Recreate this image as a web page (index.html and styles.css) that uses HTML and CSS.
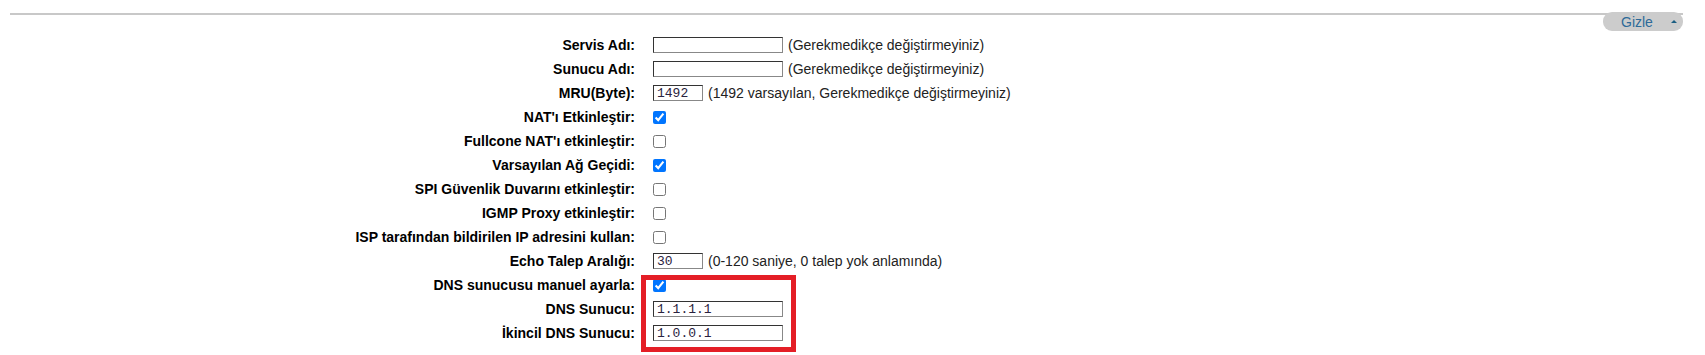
FILE: index.html
```html
<!DOCTYPE html>
<html lang="tr">
  <head>
    <meta charset="UTF-8" />
    <title>WAN Ayarları</title>
    <link rel="stylesheet" href="styles.css">
  </head>
  <body>
    <div class="bar">
      <button class="toggle" type="button">Gizle <span class="arrow"></span></button>
    </div>

    <div class="form">
      <label>Servis Adı:</label>
      <div class="field"><input type="text" class="text"> <span>(Gerekmedikçe değiştirmeyiniz)</span></div>

      <label>Sunucu Adı:</label>
      <div class="field"><input type="text" class="text"> <span>(Gerekmedikçe değiştirmeyiniz)</span></div>

      <label>MRU(Byte):</label>
      <div class="field"><input type="text" class="text short" value="1492"> <span>(1492 varsayılan, Gerekmedikçe değiştirmeyiniz)</span></div>

      <label>NAT'ı Etkinleştir:</label>
      <div class="field"><input type="checkbox" checked></div>

      <label>Fullcone NAT'ı etkinleştir:</label>
      <div class="field"><input type="checkbox"></div>

      <label>Varsayılan Ağ Geçidi:</label>
      <div class="field"><input type="checkbox" checked></div>

      <label>SPI Güvenlik Duvarını etkinleştir:</label>
      <div class="field"><input type="checkbox"></div>

      <label>IGMP Proxy etkinleştir:</label>
      <div class="field"><input type="checkbox"></div>

      <label>ISP tarafından bildirilen IP adresini kullan:</label>
      <div class="field"><input type="checkbox"></div>

      <label>Echo Talep Aralığı:</label>
      <div class="field"><input type="text" class="text short" value="30"> <span>(0-120 saniye, 0 talep yok anlamında)</span></div>

      <label>DNS sunucusu manuel ayarla:</label>
      <div class="field"><input type="checkbox" checked></div>

      <label>DNS Sunucu:</label>
      <div class="field"><input type="text" class="text" value="1.1.1.1"></div>

      <label>İkincil DNS Sunucu:</label>
      <div class="field"><input type="text" class="text" value="1.0.0.1"></div>
    </div>

    <!-- highlight drawn over the DNS rows -->
    <div class="highlight"></div>
  </body>
</html>
```

FILE: styles.css
```css
html,
body {
  height: 355px;
  overflow: hidden;
}

body {
  font-family: "Liberation Sans", Arial, sans-serif;
  font-size: 14px;
  margin: 0;
  background: #fff;
  color: #000;
  position: relative;
}

.bar {
  margin: 13px 22px 0 10px;
  border-top: 2px solid #c8c8c8;
  display: flex;
  justify-content: flex-end;
}

.toggle {
  margin-top: -3px;
  width: 80px;
  height: 19px;
  padding: 0 6px 0 18px;
  border: none;
  border-radius: 9px;
  background: #cccccc;
  color: #2e6a98;
  font-family: "Liberation Sans", Arial, sans-serif;
  font-size: 14px;
  display: flex;
  align-items: center;
  justify-content: space-between;
}

.arrow {
  width: 0;
  height: 0;
  border-left: 3px solid transparent;
  border-right: 3px solid transparent;
  border-bottom: 3px solid #1b5e82;
}

.form {
  margin-top: 2px;
  display: grid;
  grid-template-columns: 635px 1fr;
  grid-auto-rows: 24px;
  column-gap: 18px;
  align-items: center;
}

.form label {
  text-align: right;
  font-weight: bold;
  white-space: nowrap;
}

.field {
  display: flex;
  align-items: center;
  gap: 5px;
  color: #222;
}

.text {
  box-sizing: border-box;
  width: 130px;
  height: 16px;
  margin: 0;
  padding: 0 3px;
  border: 1px solid;
  border-color: #333 #888 #888 #333;
  font-family: "Liberation Mono", "Courier New", monospace;
  font-size: 13px;
  color: #2a2340;
}

.text.short {
  width: 50px;
}

input[type="checkbox"] {
  width: 13px;
  height: 13px;
  margin: 0;
}

.highlight {
  position: absolute;
  left: 641px;
  top: 275px;
  width: 145px;
  height: 67px;
  border: 5px solid #e41e26;
}
```
